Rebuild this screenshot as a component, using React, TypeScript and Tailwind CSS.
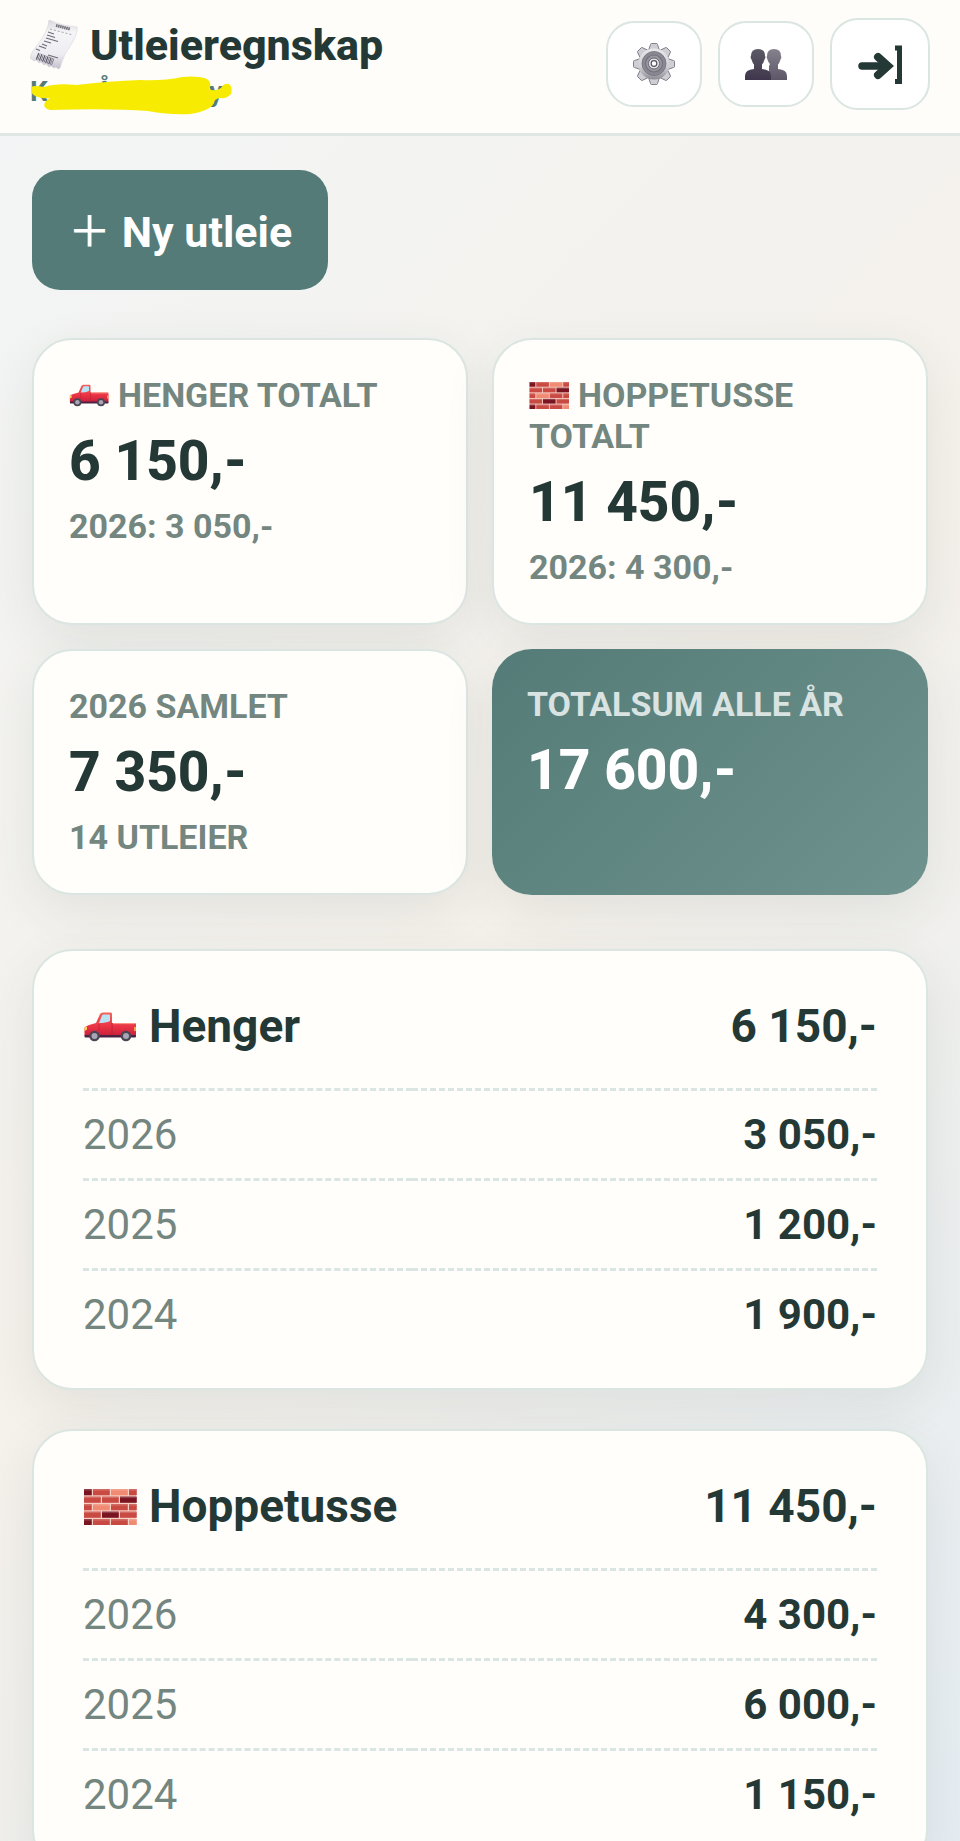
const fmt = (n: number) => n.toString().replace(/\B(?=(\d{3})+$)/g, ' ') + ',-';

const kategorier = [
  {
    navn: 'Henger',
    ikon: 'bil',
    total: 6150,
    aar: [
      { aar: 2026, sum: 3050 },
      { aar: 2025, sum: 1200 },
      { aar: 2024, sum: 1900 },
    ],
  },
  {
    navn: 'Hoppetusse',
    ikon: 'mur',
    total: 11450,
    aar: [
      { aar: 2026, sum: 4300 },
      { aar: 2025, sum: 6000 },
      { aar: 2024, sum: 1150 },
    ],
  },
];

function Bil({ className }: { className: string }) {
  return (
    <svg viewBox="0 0 52 36" className={className} aria-hidden="true">
      <defs>
        <linearGradient id="lakk" x1="0" y1="0" x2="0" y2="1">
          <stop offset="0" stopColor="#f4655c" />
          <stop offset="0.6" stopColor="#ea3445" />
          <stop offset="1" stopColor="#c8203c" />
        </linearGradient>
      </defs>
      <path d="M0.5 18.5 Q2 17 5 16 L12 14 L16 5 Q17 3.500 19 3.500 H27 Q28 3.500 28 5 V14 H51 Q52 14 52 15.500 V27 H0.5 Z" fill="url(#lakk)" />
      <path d="M15 14 L18 6.500 Q18.400 5.500 19.500 5.500 H25 Q26 5.500 26 6.500 V12 Q22 14 15 14 Z" fill="#b9e3f5" />
      <path d="M28 14 V25 M15 15 V22" stroke="#b81c33" strokeWidth="0.7" />
      <path d="M29 14.600 H51" stroke="#ff9b88" strokeWidth="1" />
      <rect x="0.5" y="26" width="51.500" height="2.500" rx="1" fill="#4b2444" />
      <path d="M0.5 18.500 L3 17.500 V20.500 L0.5 22 Z" fill="#ffd257" />
      <rect x="50" y="18" width="2" height="4" fill="#ff9d4a" />
      <circle cx="10.5" cy="27" r="5.3" fill="#4a4653" />
      <circle cx="10.5" cy="27" r="3" fill="#a9a5b4" />
      <circle cx="42" cy="27" r="5.3" fill="#4a4653" />
      <circle cx="42" cy="27" r="3" fill="#a9a5b4" />
    </svg>
  );
}

function Mur({ className }: { className: string }) {
  const steiner = [
    [0, 0, 7, '#7a1420'], [9, 0, 16, '#c94a42'], [27, 0, 16, '#f08a72'], [45, 0, 7, '#c94a42'],
    [0, 7.5, 16, '#c94a42'], [18, 7.5, 16, '#c94a42'], [36, 7.5, 16, '#7a1420'],
    [0, 15, 7, '#c94a42'], [9, 15, 16, '#f08a72'], [27, 15, 16, '#c94a42'], [45, 15, 7, '#c94a42'],
    [0, 22.5, 16, '#c94a42'], [18, 22.5, 16, '#7a1420'], [36, 22.5, 16, '#c94a42'],
    [0, 30, 7, '#7a1420'], [9, 30, 16, '#c94a42'], [27, 30, 16, '#c94a42'], [45, 30, 7, '#f08a72'],
  ] as const;
  return (
    <svg viewBox="0 0 52 36" className={className} aria-hidden="true">
      <rect width="52" height="36" fill="#f6cfc5" />
      {steiner.map(([x, y, w, farge]) => (
        <g key={`${x}-${y}`}>
          <rect x={x} y={y} width={w + 0.8} height="6.3" fill={farge} />
          <rect x={x} y={y} width={w + 0.8} height="1.6" fill="#fff" opacity="0.18" />
        </g>
      ))}
    </svg>
  );
}

function Ikon({ navn, className }: { navn: string; className: string }) {
  return navn === 'bil' ? <Bil className={className} /> : <Mur className={className} />;
}

function Kvittering() {
  return (
    <svg viewBox="0 0 48 50" className="h-[50px] w-12 shrink-0" aria-hidden="true">
      <defs>
        <linearGradient id="papir" x1="0" y1="0" x2="0" y2="1">
          <stop offset="0" stopColor="#d9d9de" />
          <stop offset="0.25" stopColor="#f5f5f7" />
          <stop offset="0.7" stopColor="#eeedf2" />
          <stop offset="1" stopColor="#c3bfcd" />
        </linearGradient>
      </defs>
      <path
        d="M19 0 Q32 6 47 7 Q48 13 42 23 Q33 35 30 48 L28 49 L26 47 L24 48 L21 46 L19 47 L16 44 L14 45 L11 42 L9 43 L6 40 L4 41 L0 38 Q1 32 8 24 Q18 11 19 0 Z"
        fill="url(#papir)"
        stroke="#c9c6d0"
        strokeWidth="0.4"
      />
      <path d="M26 5.5 L40 9" stroke="#77757e" strokeWidth="3" strokeDasharray="1.6 0.5" />
      <path d="M20 9 L43 15" stroke="#a5a3ac" strokeWidth="1" strokeDasharray="2 2" />
      <path d="M18 12 L24 14 M17 15 L25 17.5 M16 18 L28 21.5 M14 21 L21 23 M12 24 L17 26 M9 26 L16 28.5 M6 29 L10 30.5 M18 35 L28 38" stroke="#6d6b76" strokeWidth="1.1" />
      <path d="M7 36 L23 42" stroke="#5a5765" strokeWidth="7" strokeDasharray="1.2 0.7 0.6 0.8" />
    </svg>
  );
}

function Tannhjul() {
  return (
    <svg viewBox="0 0 42 44" className="h-11 w-[42px]" aria-hidden="true">
      <defs>
        <linearGradient id="metall" x1="0" y1="0" x2="0" y2="1">
          <stop offset="0" stopColor="#e9e8ec" />
          <stop offset="0.6" stopColor="#cfced4" />
          <stop offset="1" stopColor="#8d8a95" />
        </linearGradient>
      </defs>
      <g fill="#cfced4" stroke="#77747f" strokeWidth="0.9">
        {[0, 45, 90, 135, 180, 225, 270, 315].map(v => (
          <path key={v} d="M15 10 L17.500 2.500 Q17.700 1.500 18.500 1.500 H23.500 Q24.300 1.500 24.500 2.500 L27 10 Z" transform={`rotate(${v} 21 22)`} />
        ))}
      </g>
      <circle cx="21" cy="22" r="15.5" fill="url(#metall)" />
      <circle cx="21" cy="21.5" r="12" fill="#8a8892" stroke="#74727b" strokeWidth="0.8" />
      <circle cx="21" cy="21.5" r="8.500" fill="#98969f" stroke="#74727b" strokeWidth="1.2" />
      <circle cx="21" cy="21.5" r="5.500" fill="#e4e3e8" stroke="#6a6773" strokeWidth="1" />
      <circle cx="21" cy="21.5" r="2.800" fill="#fff" stroke="#55525e" strokeWidth="1.2" />
    </svg>
  );
}

function Personer() {
  return (
    <svg viewBox="0 0 42 44" className="h-11 w-[42px]" aria-hidden="true">
      <defs>
        <linearGradient id="bak" x1="0" y1="0" x2="0" y2="1">
          <stop offset="0" stopColor="#85828d" />
          <stop offset="1" stopColor="#5d5668" />
        </linearGradient>
        <linearGradient id="foran" x1="0" y1="0" x2="0" y2="1">
          <stop offset="0" stopColor="#5c5a65" />
          <stop offset="1" stopColor="#3f364b" />
        </linearGradient>
      </defs>
      <path d="M29 7 Q36 7 36 14 Q37 15.500 35.500 17.500 Q34.500 21 33 22.500 V27 Q42 27.500 42 34 V38 H24 V24 L25 22 Q23 20 22.500 17.500 Q21 15 22 14 Q22 7 29 7 Z" fill="url(#bak)" />
      <path d="M13 7 Q20 7 20 14 Q21 15.500 19.500 17.500 Q18.500 21 17 22.500 V27 Q26 27.500 26 34 V38 H0 V34 Q0 27.500 9 27 V22.500 Q7.500 21 6.500 17.500 Q5 15.500 6 14 Q6 7 13 7 Z" fill="url(#foran)" />
    </svg>
  );
}

function LoggUt() {
  return (
    <svg viewBox="0 0 46 40" className="h-10 w-[46px]" fill="none" stroke="#243936" aria-hidden="true">
      <path d="M5 22 H28" strokeWidth="7.500" strokeLinecap="round" />
      <path d="M21 13 L31 22 L21 31" strokeWidth="8" strokeLinecap="round" strokeLinejoin="miter" />
      <path d="M38 4 H42.500 V37.500 H38" strokeWidth="5" />
    </svg>
  );
}

function Navn() {
  return (
    <div className="relative mt-[5px] flex w-[193px] justify-between text-[28px] leading-[33px] font-bold text-[#547b7a]">
      <span>K</span>
      <span className="mr-12">Å</span>
      <span>y</span>
      <svg viewBox="0 0 204 42" className="absolute top-0 left-0 h-[42px] w-[204px]" aria-hidden="true">
        <path
          d="M1 12 Q4 10 14 12 Q26 8 46 10 Q80 6 110 5 Q134 6 152 2 Q178 0 180 8 Q181 12 179 14 Q185 17 191 13 Q194 8 199 9 Q203 12 201 19 Q197 24 190 23 Q184 24 184 28 Q180 36 160 39 Q140 40 118 36 Q80 33 20 35 Q12 33 15 27 Q17 25 20 23 Q14 24 8 22 Q0 20 1 12 Z"
          fill="#f7eb02"
        />
      </svg>
    </div>
  );
}

const sumKort = 'rounded-[40px] border-2 border-[#dbe5e2] bg-[#fffefa] p-[35px] shadow-[0_16px_52px_rgba(47,62,60,0.09)]';
const etikett = 'text-[34px] leading-[41px] font-bold uppercase text-[#748680]';
const belop = 'my-[13px] text-[55px] leading-[64px] font-extrabold';
const headerKnapp = 'flex items-center justify-center rounded-[28px] border-2 border-[#dbe5e2] bg-white';

export default function App() {
  return (
    <div className="min-h-screen bg-[linear-gradient(135deg,#f2f5f6_0%,#f5f1eb_50%,#e5edf3_100%)] font-[Roboto,sans-serif] text-[#243936]">
      <header className="flex items-center justify-between border-b-[3px] border-[#dfe7e5] bg-[#fffdf9] px-[30px] pt-[18px] pb-[23px]">
        <div>
          <h1 className="flex items-center gap-3 text-[43px] leading-[49px] font-extrabold">
            <Kvittering />
            Utleieregnskap
          </h1>
          <Navn />
        </div>
        <div className="flex items-center gap-4">
          <button type="button" aria-label="Innstillinger" className={`${headerKnapp} h-[86px] w-24`}>
            <Tannhjul />
          </button>
          <button type="button" aria-label="Brukere" className={`${headerKnapp} h-[86px] w-24`}>
            <Personer />
          </button>
          <button type="button" aria-label="Logg ut" className={`${headerKnapp} h-[92px] w-[100px]`}>
            <LoggUt />
          </button>
        </div>
      </header>

      <main className="px-8 pt-[34px] pb-10">
        <button
          type="button"
          className="h-[120px] rounded-[28px] bg-[#547b77] px-9 pt-1 font-[Roboto,'Noto_Sans_CJK_JP',sans-serif] text-[43px] font-bold text-white"
        >
          <span className="font-medium">＋</span> Ny utleie
        </button>

        <div className="mt-12 grid grid-cols-2 gap-6">
          <div className={sumKort}>
            <p className={etikett}>
              <Bil className="mr-[9px] inline h-[27px] w-10 align-[-2px]" />
              Henger totalt
            </p>
            <p className={belop}>{fmt(6150)}</p>
            <p className={etikett}>2026: {fmt(3050)}</p>
          </div>
          <div className={sumKort}>
            <p className={etikett}>
              <Mur className="mr-[9px] inline h-[27px] w-10 align-[-2px]" />
              Hoppetusse totalt
            </p>
            <p className={belop}>{fmt(11450)}</p>
            <p className={etikett}>2026: {fmt(4300)}</p>
          </div>
          <div className={sumKort}>
            <p className={etikett}>2026 samlet</p>
            <p className={belop}>{fmt(7350)}</p>
            <p className={etikett}>14 utleier</p>
          </div>
          <div className="rounded-[40px] bg-[linear-gradient(135deg,#547b77,#6f938e)] p-[35px] text-white shadow-[0_16px_52px_rgba(47,62,60,0.09)]">
            <p className="text-[34px] leading-[41px] font-bold text-[#d8e3e2] uppercase">Totalsum alle år</p>
            <p className={belop}>{fmt(17600)}</p>
          </div>
        </div>

        <div className="mt-[54px] flex flex-col gap-[39px]">
          {kategorier.map(k => (
            <section
              key={k.navn}
              className="rounded-[40px] border-2 border-[#dbe5e2] bg-[#fffefa] px-[49px] pt-[49px] pb-[30px] shadow-[0_16px_52px_rgba(47,62,60,0.09)]"
            >
              <div className="mb-[35px] flex items-center justify-between text-[46px] leading-[53px] font-bold">
                <h2 className="flex items-center gap-3">
                  <Ikon navn={k.ikon} className="h-9 w-[54px]" />
                  {k.navn}
                </h2>
                <span>{fmt(k.total)}</span>
              </div>
              <table className="w-full text-[42px] leading-[51px]">
                <tbody>
                  {k.aar.map(r => (
                    <tr key={r.aar} className="border-t-[3px] border-dashed border-[#dbe5e2]">
                      <th scope="row" className="py-[18px] text-left font-normal text-[#748680]">{r.aar}</th>
                      <td className="py-[18px] text-right font-bold">{fmt(r.sum)}</td>
                    </tr>
                  ))}
                </tbody>
              </table>
            </section>
          ))}
        </div>
      </main>
    </div>
  );
}
